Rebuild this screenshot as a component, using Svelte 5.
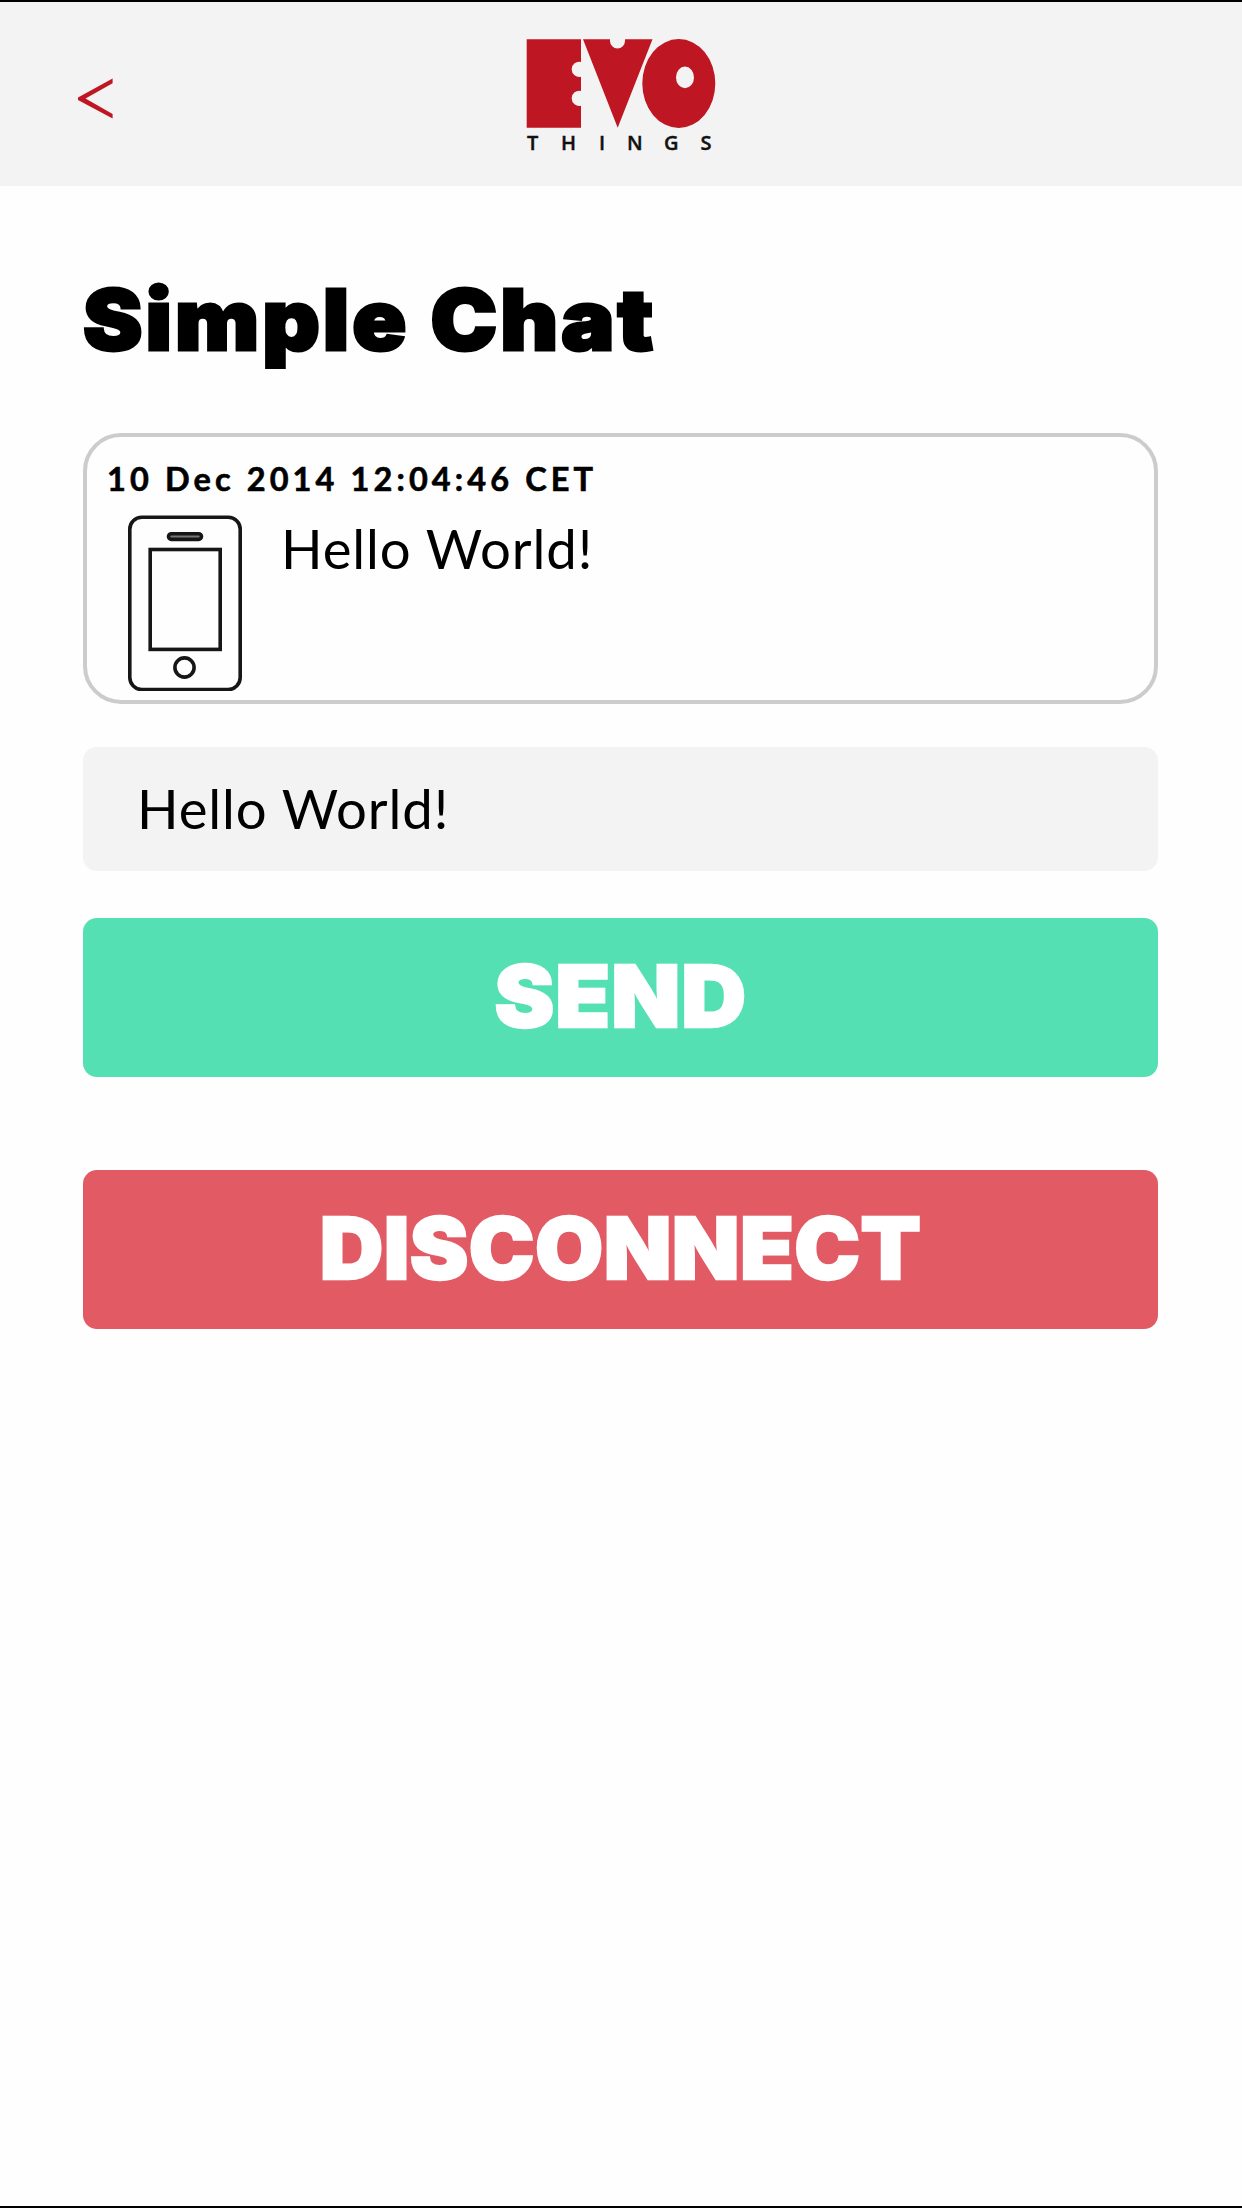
<script>
  let draft = $state('Hello World!');
  const messages = [{ time: '10 Dec 2014 12:04:46 CET', text: 'Hello World!' }];
</script>

<div class="screen">
  <header>
    <button class="back" aria-label="Back">
      <svg width="38" height="44" viewBox="0 0 38 44">
        <path d="M35.6 1.5V6.2L8.5 21.5L35.6 37V41.5L1 23V20.5Z" />
      </svg>
    </button>
    <svg class="logo" width="190" height="120" viewBox="0 0 190 120">
      <path class="red" d="M0.7 1.3H55V23.9A7.6 7.6 0 1 0 55 38.7V52.9A7.6 7.6 0 1 0 55 67.7V89.7H0.7Z" />
      <path class="red" d="M57 1.3H84V3A7.5 7.5 0 0 0 99 3V1.3H126.5L91.7 89.7Z" />
      <path class="red" fill-rule="evenodd" d="M152.8 1.1A36.5 44.4 0 0 1 152.8 89.9A36.5 44.4 0 0 1 152.8 1.1ZM159 28.6A9 10.8 0 0 0 159 50.2A9 10.8 0 0 0 159 28.6Z" />
      <text x="1 35 73 101 138 174.5" y="112">THINGS</text>
    </svg>
  </header>

  <main>
    <h1>Simple Chat</h1>

    {#each messages as message}
      <article>
        <time>{message.time}</time>
        <div class="body">
          <svg width="114" height="176" viewBox="0 0 114 176">
            <rect x="1.8" y="2.2" width="110.4" height="172.4" rx="12" />
            <rect x="40.5" y="18.8" width="33" height="5.6" rx="2.8" class="speaker" />
            <rect x="22.2" y="34.5" width="70" height="99.9" />
            <circle cx="56.5" cy="152.5" r="9.6" />
          </svg>
          <p>{message.text}</p>
        </div>
      </article>
    {/each}

    <input bind:value={draft} aria-label="Message" />
    <button class="action send"><span>SEND</span></button>
    <button class="action disconnect"><span>DISCONNECT</span></button>
  </main>
</div>

<style>
  :global(body) {
    margin: 0;
    background: #fff;
  }
  .screen {
    box-sizing: border-box;
    width: 1242px;
    height: 2208px;
    border-top: 2px solid #000;
    border-bottom: 2px solid #000;
    background: #fefefe;
    color: #000;
    font-family: Lato, "Liberation Sans", sans-serif;
    overflow: hidden;
  }
  header {
    display: grid;
    grid-template-columns: 526px 190px 1fr;
    align-items: start;
    height: 184px;
    background: #f3f3f3;
  }
  .back {
    display: flex;
    padding: 75px 0 0 77px;
    border: 0;
    background: none;
  }
  .back path,
  .red {
    fill: #be1622;
  }
  .logo {
    margin-top: 36px;
  }
  .logo text {
    font: 600 20px "Open Sans", sans-serif;
    fill: #111;
    stroke: #111;
    stroke-width: 0.4px;
  }
  main {
    display: flex;
    flex-direction: column;
    padding: 0 84px 0 83px;
  }
  h1 {
    margin: 82px 0 0;
    height: 165px;
    font: 900 84px/104px Inter, sans-serif;
    letter-spacing: 2.9px;
    -webkit-text-stroke: 3px #000;
    white-space: nowrap;
    transform: scaleX(1.062);
    transform-origin: 0 0;
  }
  article {
    box-sizing: border-box;
    height: 271px;
    padding: 22px 20px 0;
    border: 4px solid #ccc;
    border-radius: 38px;
  }
  time {
    display: block;
    height: 56px;
    font-size: 32.5px;
    font-weight: 700;
    line-height: 40px;
    letter-spacing: 4.1px;
    -webkit-text-stroke: 0.6px #000;
    white-space: nowrap;
  }
  .body {
    display: flex;
    gap: 39px;
    padding-left: 21px;
  }
  .body svg {
    flex: none;
    fill: none;
    stroke: #161616;
    stroke-width: 3.6;
  }
  .body .speaker {
    fill: #777;
  }
  p {
    margin: 0;
    font-size: 54.5px;
    line-height: 66px;
    letter-spacing: 0.9px;
    white-space: nowrap;
  }
  input {
    box-sizing: border-box;
    width: 100%;
    height: 124px;
    margin: 43px 0 47px;
    padding: 0 54px 2px;
    border: 0;
    border-radius: 14px;
    background: #f3f3f3;
    color: #000;
    font: 54.5px Lato, sans-serif;
    letter-spacing: 0.9px;
  }
  .action {
    height: 159px;
    padding: 0;
    border: 0;
    border-radius: 14px;
    color: #fff;
    font: 900 85px/156px Inter, sans-serif;
    text-align: center;
    -webkit-text-stroke: 2.4px #fff;
  }
  .action span {
    display: inline-block;
    position: relative;
    top: -1px;
  }
  .send {
    margin-bottom: 93px;
    background: #55e0b4;
    letter-spacing: 1px;
  }
  .send span {
    margin-right: -1px;
    transform: scaleX(1.055);
  }
  .disconnect {
    background: #e25a64;
    letter-spacing: 0.4px;
  }
  .disconnect span {
    transform: scaleX(1.035);
  }
</style>
